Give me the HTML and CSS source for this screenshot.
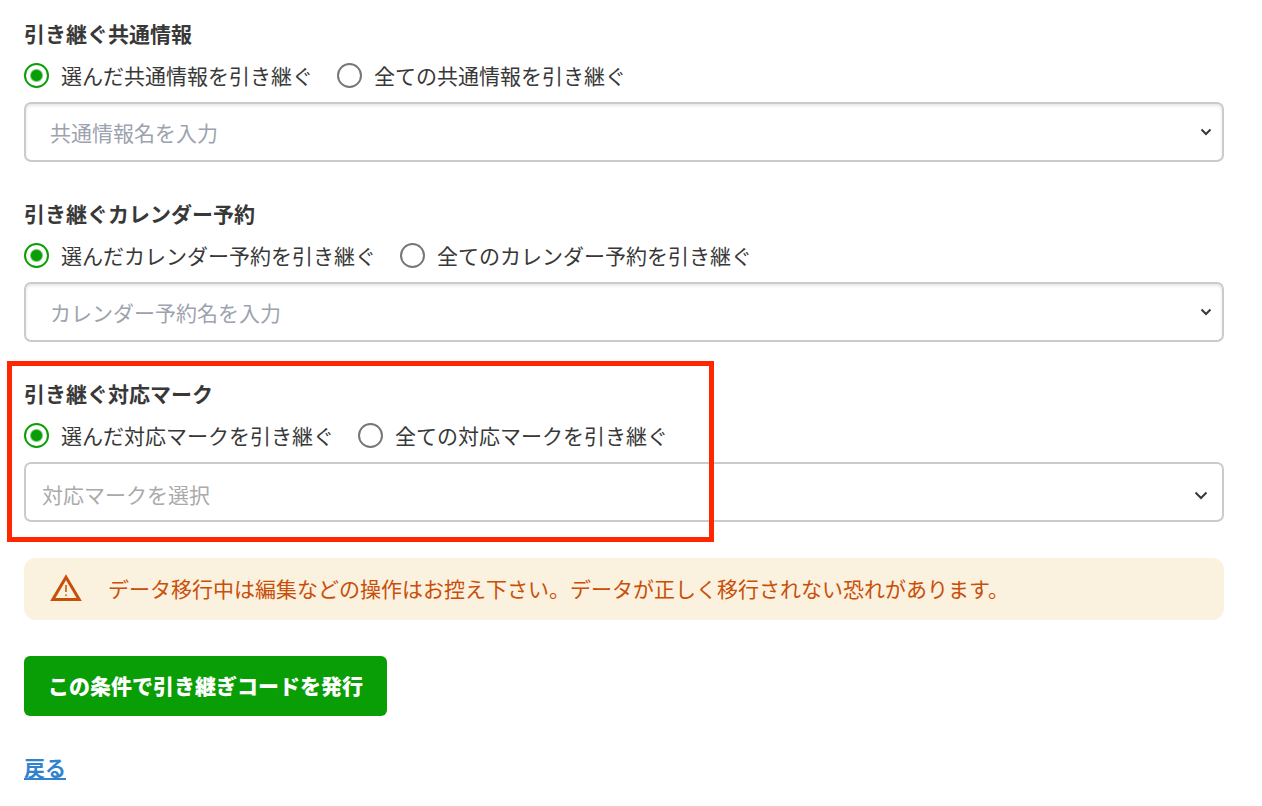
FILE: index.html
```html
<!DOCTYPE html>
<html lang="ja">
<head>
<meta charset="utf-8">
<meta name="viewport" content="width=device-width, initial-scale=1">
<title>引き継ぎコードの発行</title>
<link rel="stylesheet" href="styles.css">
</head>
<body>
<form class="form">
  <fieldset class="section">
    <legend class="section-title">引き継ぐ共通情報</legend>
    <div class="choices">
      <label class="choice"><input class="radio" type="radio" name="info" checked>選んだ共通情報を引き継ぐ</label>
      <label class="choice"><input class="radio" type="radio" name="info">全ての共通情報を引き継ぐ</label>
    </div>
    <div class="field">
      <input class="control control-text" type="text" role="combobox" aria-label="共通情報名" aria-expanded="false" placeholder="共通情報名を入力">
      <svg class="chevron" viewBox="0 0 12 8" aria-hidden="true"><path d="M1.500 1.500 6 6l4.500-4.500"/></svg>
    </div>
  </fieldset>

  <fieldset class="section">
    <legend class="section-title">引き継ぐカレンダー予約</legend>
    <div class="choices">
      <label class="choice"><input class="radio" type="radio" name="calendar" checked>選んだカレンダー予約を引き継ぐ</label>
      <label class="choice"><input class="radio" type="radio" name="calendar">全てのカレンダー予約を引き継ぐ</label>
    </div>
    <div class="field">
      <input class="control control-text" type="text" role="combobox" aria-label="カレンダー予約名" aria-expanded="false" placeholder="カレンダー予約名を入力">
      <svg class="chevron" viewBox="0 0 12 8" aria-hidden="true"><path d="M1.500 1.500 6 6l4.500-4.500"/></svg>
    </div>
  </fieldset>

  <fieldset class="section">
    <legend class="section-title">引き継ぐ対応マーク</legend>
    <div class="choices">
      <label class="choice"><input class="radio" type="radio" name="mark" checked>選んだ対応マークを引き継ぐ</label>
      <label class="choice"><input class="radio" type="radio" name="mark">全ての対応マークを引き継ぐ</label>
    </div>
    <div class="field">
      <select class="control control-select" aria-label="対応マーク"><option>対応マークを選択</option></select>
      <svg class="chevron chevron-select" viewBox="0 0 14 9" aria-hidden="true"><path d="M1.500 1.500 7 7l5.500-5.500"/></svg>
    </div>
    <div class="highlight"></div>
  </fieldset>

  <div class="alert" role="alert">
    <svg class="alert-icon" viewBox="0 0 32 28" aria-hidden="true">
      <path class="alert-triangle" d="M16 3.200 29.200 25.500H2.800Z"/>
      <path class="alert-mark" d="M16 11v7M16 20.500v1.500"/>
    </svg>
    <p class="alert-text">データ移行中は編集などの操作はお控え下さい。データが正しく移行されない恐れがあります。</p>
  </div>

  <button class="submit" type="submit">この条件で引き継ぎコードを発行</button>
  <a class="back" href="#">戻る</a>
</form>
</body>
</html>
```
FILE: styles.css
```css
* {
  box-sizing: border-box;
}

body {
  margin: 0;
  background: #fff;
  color: #383838;
  font-family: "Noto Sans CJK JP", sans-serif;
  font-size: 21px;
  line-height: 30px;
}

.form {
  display: flex;
  flex-direction: column;
  align-items: flex-start;
  gap: 36px;
  padding: 18px 38px 20px 24px;
}

.section {
  position: relative;
  width: 100%;
  min-width: 0;
  margin: 0;
  padding: 0;
  border: 0;
}

.section-title {
  padding: 0;
  font-weight: 700;
}

.choices {
  display: flex;
  flex-wrap: wrap;
  gap: 12px 24px;
  padding: 15px 0 14px;
}

.choice {
  display: flex;
  align-items: center;
  gap: 12px;
  line-height: 25px;
}

.radio {
  appearance: none;
  flex: none;
  width: 25px;
  height: 25px;
  margin: 0;
  border: 2px solid #777;
  border-radius: 50%;
  background: #fff;
}

.radio:checked {
  border-color: #0a9e06;
  background: radial-gradient(circle, #0a9e06 5px, #fff 7px);
}

.field {
  display: grid;
  align-items: center;
}

.control,
.chevron {
  grid-area: 1 / 1;
}

.control {
  appearance: none;
  width: 100%;
  height: 60px;
  margin: 0;
  border: 2px solid #cbcbcb;
  border-radius: 7px;
  background: #fff;
  font: inherit;
}

.control-text {
  padding: 0 40px 0 24px;
  box-shadow: inset 0 2px 3px #e8e8e8;
}

.control-text::placeholder {
  color: #9ca3af;
  opacity: 1;
}

.control-select {
  padding: 4px 40px 0 16px;
  color: #aaa;
}

.chevron {
  justify-self: end;
  width: 12px;
  height: 8px;
  margin-right: 12px;
  fill: none;
  stroke: #383838;
  stroke-width: 2;
  pointer-events: none;
}

.chevron-select {
  width: 14px;
  height: 9px;
  margin: 7px 16px 0 0;
}

/* The offsets start below the legend, so the top one also spans the title. */
.highlight {
  position: absolute;
  top: -47px;
  bottom: -20px;
  left: -17px;
  width: 707px;
  border: 5px solid #ff2600;
  pointer-events: none;
}

.alert {
  display: flex;
  align-items: center;
  gap: 26px;
  width: 100%;
  padding: 15px 26px 17px;
  border-radius: 12px;
  background: #faf1df;
  color: #c94f08;
}

.alert-icon {
  flex: none;
  width: 32px;
  height: 28px;
  fill: none;
  stroke: currentColor;
}

.alert-triangle {
  stroke-width: 3;
}

.alert-mark {
  stroke-width: 1.5;
}

.alert-text {
  margin: 0;
}

.submit {
  padding: 14px 24px 16px;
  border: 0;
  border-radius: 6px;
  background: #0a9e06;
  color: #fff;
  font: inherit;
  font-weight: 900;
}

.back {
  color: #3182ce;
  font-weight: 700;
  text-decoration: underline;
}
```
